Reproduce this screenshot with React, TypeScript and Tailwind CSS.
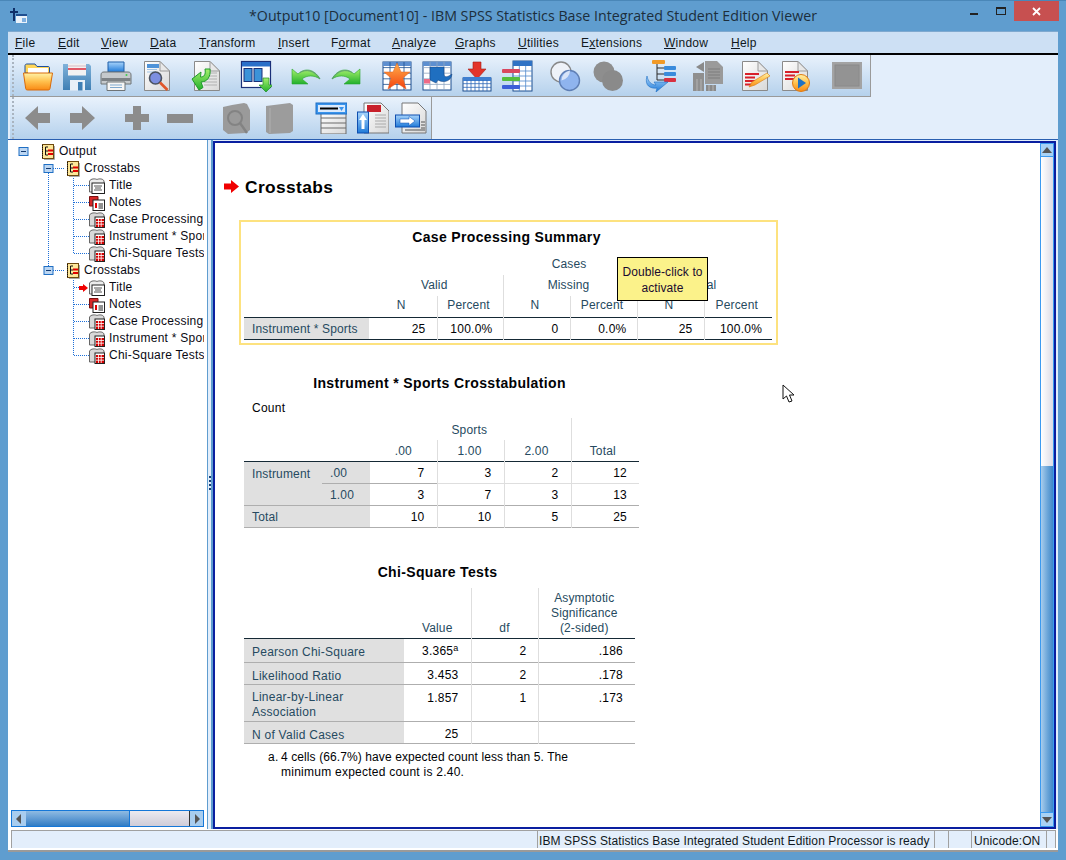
import React from 'react';

const FONT = "font-['Liberation_Sans',Arial,sans-serif]";

function Defs() {
  return (
    <svg width="0" height="0" className="absolute">
      <defs>
        <linearGradient id="orange" x1="0" y1="0" x2="0" y2="1">
          <stop offset="0" stopColor="#fff3a8" />
          <stop offset="0.5" stopColor="#ffc04d" />
          <stop offset="1" stopColor="#f98a14" />
        </linearGradient>
        <linearGradient id="green" x1="0" y1="0" x2="0" y2="1">
          <stop offset="0" stopColor="#a5f06c" />
          <stop offset="1" stopColor="#22b02c" />
        </linearGradient>
        <linearGradient id="doc" x1="0" y1="0" x2="1" y2="1">
          <stop offset="0" stopColor="#ffffff" />
          <stop offset="1" stopColor="#d8d8d8" />
        </linearGradient>
        <linearGradient id="blue" x1="0" y1="0" x2="0" y2="1">
          <stop offset="0" stopColor="#a8d4fb" />
          <stop offset="1" stopColor="#1f7ad8" />
        </linearGradient>
        <linearGradient id="floppy" x1="0" y1="0" x2="0" y2="1">
          <stop offset="0" stopColor="#7fb2da" />
          <stop offset="1" stopColor="#3f7fb4" />
        </linearGradient>
        <linearGradient id="star" x1="0" y1="0" x2="0" y2="1">
          <stop offset="0" stopColor="#ffb04a" />
          <stop offset="1" stopColor="#f4420f" />
        </linearGradient>
      </defs>
    </svg>
  );
}

function Icon({ children, className = '' }: { children: React.ReactNode; className?: string }) {
  return (
    <svg width="32" height="32" viewBox="0 0 32 32" className={`shrink-0 ${className}`}>
      {children}
    </svg>
  );
}

const Page = ({ fold = true }: { fold?: boolean }) => (
  <>
    <path d="M3.5 1.5H19L28.5 11V30.5H3.5Z" fill="url(#doc)" stroke="#8a8a8a" />
    {fold && <path d="M19 1.5V11H28.5Z" fill="#e8e8e8" stroke="#9a9a9a" />}
  </>
);

const GridRows = ({ x, y, w, h, cols, rows, c = '#1d4f8f' }: { x: number; y: number; w: number; h: number; cols: number; rows: number; c?: string }) => (
  <>
    {Array.from({ length: cols - 1 }, (_, i) => (
      <path key={`c${i}`} d={`M${x + ((i + 1) * w) / cols} ${y}V${y + h}`} stroke={c} strokeWidth="0.8" />
    ))}
    {Array.from({ length: rows - 1 }, (_, i) => (
      <path key={`r${i}`} d={`M${x} ${y + ((i + 1) * h) / rows}H${x + w}`} stroke={c} strokeWidth="0.8" />
    ))}
  </>
);

const icons1: { el: React.ReactNode; ml: string }[] = [
  {
    ml: 'ml-[10px]',
    el: (
      <Icon>
        <path d="M3 8V5.5C3 4.5 4 4 5 4H13L15 6.5H26C27 6.5 27.5 7 27.5 8V13H3Z" fill="#ffd659" stroke="#1d4f9f" />
        <rect x="6" y="8" width="20" height="5" fill="#fff" />
        <path d="M1.5 13H30.5L28 28.5C28 29.5 27 30 26 30H5.5C4.5 30 3.8 29.5 3.7 28.5Z" fill="url(#orange)" stroke="#d96a0a" />
      </Icon>
    ),
  },
  {
    ml: 'ml-[7px]',
    el: (
      <Icon>
        <path d="M2 4H28L30 6V30H2Z" fill="url(#floppy)" />
        <rect x="7" y="3.5" width="18" height="12" fill="#f2f2f2" />
        <rect x="7" y="8" width="18" height="2" fill="#e05a68" />
        <rect x="7" y="5.5" width="18" height="1" fill="#d8b8c0" />
        <rect x="9" y="20" width="15" height="10.5" fill="#e8f0f8" />
        <rect x="17" y="22" width="4.5" height="8.5" fill="#3f7fb4" />
      </Icon>
    ),
  },
  {
    ml: 'ml-[7px]',
    el: (
      <Icon>
        <path d="M8 2H24V12H8Z" fill="url(#blue)" stroke="#1f5fa8" />
        <path d="M4 12H28C30 12 31 13 31 15V24H1V15C1 13 2 12 4 12Z" fill="#c5c9cc" stroke="#6f7477" />
        <rect x="1.5" y="18" width="29" height="3" fill="#7d8286" />
        <circle cx="26.5" cy="15" r="1" fill="#3dcf4a" />
        <path d="M7 22H25V30.5H7Z" fill="#f6f6f6" stroke="#6f7477" />
        <path d="M10 25H22M10 27.5H22" stroke="#7fa9cf" />
      </Icon>
    ),
  },
  {
    ml: 'ml-[9px]',
    el: (
      <Icon>
        <Page />
        <rect x="6" y="4" width="12" height="4" fill="#4f93d8" />
        <path d="M6 9.5H16M6 12H15" stroke="#9ec3e6" />
        <circle cx="14.5" cy="18" r="6" fill="#7d8fe0" stroke="#4a5260" strokeWidth="1.6" />
        <path d="M19 22.5L26.5 30" stroke="#e0562a" strokeWidth="2.6" />
      </Icon>
    ),
  },
  {
    ml: 'ml-[18px]',
    el: (
      <Icon>
        <Page />
        <path d="M15 13H26M16 16H26M16 19H26M13 22H26M13 25H26" stroke="#b0b0b0" />
        <path d="M1 19L10 12L9.5 17C13 17 15 15 14 9H19C20 17 16 22 10 22L12 27.5L8 30Z" fill="url(#green)" stroke="#1f9a2a" />
      </Icon>
    ),
  },
  {
    ml: 'ml-[17px]',
    el: (
      <Icon>
        <rect x="1.5" y="1.5" width="29" height="26" fill="#fff" stroke="#1a2f78" strokeWidth="1.2" />
        <rect x="2" y="2" width="28" height="4.5" fill="#2a6fc8" />
        <rect x="4" y="8.5" width="8" height="13" fill="#3c93d8" stroke="#1a2f78" />
        <rect x="14" y="8.5" width="8" height="13" fill="#3c93d8" stroke="#1a2f78" />
        <path d="M23 18H29V25H33L26 32L19 25H23Z" fill="url(#green)" stroke="#1f8a2a" strokeWidth="0.7" />
      </Icon>
    ),
  },
  {
    ml: 'ml-[18px]',
    el: (
      <Icon>
        <path d="M2 9L8 14C14 8 24 8 30 19C24 15 17 15 12 19L18 24H2Z" fill="url(#green)" stroke="#2aa52f" strokeWidth="0.6" />
        <path d="M10 12.5C16 9 24 10 30 19" fill="none" stroke="#5c8f78" strokeWidth="0.8" />
      </Icon>
    ),
  },
  {
    ml: 'ml-[8px]',
    el: (
      <Icon>
        <path d="M30 9L24 14C18 8 8 8 2 19C8 15 15 15 20 19L14 24H30Z" fill="url(#green)" stroke="#2aa52f" strokeWidth="0.6" />
        <path d="M22 12.5C16 9 8 10 2 19" fill="none" stroke="#5c8f78" strokeWidth="0.8" />
      </Icon>
    ),
  },
  {
    ml: 'ml-[19px]',
    el: (
      <Icon>
        <rect x="2" y="2" width="28" height="28" fill="#fff" stroke="#1d4f8f" />
        <rect x="2" y="2" width="28" height="4" fill="#5d8fd0" />
        <GridRows x={2} y={2} w={28} h={28} cols={4} rows={5} />
        <path d="M16 3L20 12H29L22 18L25 29L16 23L7 29L10 18L3 12H12Z" fill="url(#star)" stroke="#e0611f" strokeWidth="0.5" />
      </Icon>
    ),
  },
  {
    ml: 'ml-[8px]',
    el: (
      <Icon>
        <rect x="2" y="2" width="28" height="28" fill="#fff" stroke="#1d4f8f" />
        <rect x="2" y="2" width="28" height="4" fill="#5d8fd0" />
        <GridRows x={2} y={2} w={28} h={28} cols={4} rows={5} c="#8ea4c0" />
        <path d="M9 7H23V14C23 18 27 17 31 14C30 22 22 23 17 20L15 23L9 20Z" fill="#1f6fc0" stroke="#163f78" strokeWidth="0.5" />
        <rect x="3" y="19" width="6" height="4.5" fill="#ee6a86" />
      </Icon>
    ),
  },
  {
    ml: 'ml-[8px]',
    el: (
      <Icon>
        <path d="M12 2H20V9H25L16 19L7 9H12Z" fill="#e3342a" stroke="#a51c16" strokeWidth="0.6" />
        <rect x="2" y="18" width="28" height="13" fill="#fff" stroke="#1d4f8f" />
        <rect x="2" y="17" width="28" height="4" fill="#3f7fd0" />
        <GridRows x={2} y={20} w={28} h={11} cols={7} rows={3} c="#2f68b8" />
      </Icon>
    ),
  },
  {
    ml: 'ml-[8px]',
    el: (
      <Icon>
        <rect x="12" y="1" width="19" height="30" fill="#fff" stroke="#1d4f8f" />
        <rect x="12" y="1" width="19" height="5" fill="#2f72c4" />
        <GridRows x={12} y={6} w={19} h={25} cols={3} rows={5} c="#4f88cc" />
        <rect x="1" y="9" width="18" height="4" rx="1" fill="#d9485f" />
        <rect x="1" y="17" width="18" height="4" rx="1" fill="#55bd3d" />
        <rect x="1" y="25" width="18" height="4" rx="1" fill="#3c5fd8" />
      </Icon>
    ),
  },
  {
    ml: 'ml-[16px]',
    el: (
      <Icon>
        <circle cx="12" cy="12" r="10" fill="#eef2f8" stroke="#888" strokeWidth="1.4" />
        <circle cx="20.5" cy="20.5" r="10" fill="#8fb4ee" stroke="#5f7fb5" strokeWidth="1.4" />
        <path d="M12.5 20.5A10 10 0 0 1 21 10.5A10 10 0 0 1 12.5 20.5Z" fill="#d8e4f8" />
      </Icon>
    ),
  },
  {
    ml: 'ml-[11px]',
    el: (
      <Icon>
        <circle cx="12" cy="12" r="10.5" fill="#8e8e8e" />
        <circle cx="20.5" cy="20.5" r="10.5" fill="#8a8a8a" />
      </Icon>
    ),
  },
  {
    ml: 'ml-[20px]',
    el: (
      <Icon>
        <rect x="8" y="0" width="13" height="4" rx="1" fill="#f29a27" />
        <rect x="20" y="6" width="12" height="4" rx="1" fill="#3a8bdc" />
        <rect x="20" y="12" width="12" height="4" rx="1" fill="#3a8bdc" />
        <rect x="20" y="18" width="12" height="4" rx="1" fill="#d83040" />
        <path d="M13 4V20M13 8H20M13 14H20M13 20H20" stroke="#2a2a2a" />
        <path d="M3 16C0 26 7 29 13 28L12 32L24 22L10 22L12 25C8 25 4 22 3 16Z" fill="url(#blue)" stroke="#1f6fc4" strokeWidth="0.6" />
      </Icon>
    ),
  },
  {
    ml: 'ml-[16px]',
    el: (
      <Icon>
        <path d="M1 13H12V31H1Z" fill="#8f8f8f" />
        <path d="M13 1H25L31 7V24H13Z" fill="#9a9a9a" />
        <path d="M16 9H28M16 12H28M16 15H28M16 18H28" stroke="#7c7c7c" />
        <path d="M12 2L4 7L12 12ZM6 7H13" fill="#8a8a8a" />
        <path d="M14 25H24V31H14Z" fill="#8a8a8a" />
        <path d="M5 19V31M9 19V31M17 25V31M21 25V31" stroke="#b4b4b4" />
      </Icon>
    ),
  },
  {
    ml: 'ml-[15px]',
    el: (
      <Icon>
        <Page />
        <rect x="6" y="13" width="14" height="2" fill="#d8202a" />
        <rect x="6" y="16.5" width="10" height="2" fill="#d8202a" />
        <rect x="6" y="20" width="14" height="2" fill="#d8202a" />
        <rect x="6" y="23.5" width="7" height="2" fill="#d8202a" />
        <path d="M10 27L13 22L28 13L31 16L16 25Z" fill="url(#orange)" stroke="#d97a10" strokeWidth="0.6" />
      </Icon>
    ),
  },
  {
    ml: 'ml-[8px]',
    el: (
      <Icon>
        <Page />
        <rect x="6" y="11" width="14" height="2" fill="#d8202a" />
        <rect x="6" y="14.5" width="10" height="2" fill="#d8202a" />
        <rect x="6" y="18" width="13" height="2" fill="#d8202a" />
        <circle cx="22" cy="23" r="8.5" fill="url(#orange)" stroke="#e07a10" />
        <path d="M19 17.5L27 23L19 28.5Z" fill="#1f72c4" />
      </Icon>
    ),
  },
  {
    ml: 'ml-[20px]',
    el: (
      <Icon>
        <rect x="1" y="2" width="30" height="27" fill="#a3a3a3" />
        <rect x="4" y="5" width="24" height="21" fill="#939393" stroke="#8a8a8a" />
      </Icon>
    ),
  },
];

const icons2: { el: React.ReactNode; ml: string }[] = [
  {
    ml: 'ml-[10px]',
    el: (
      <Icon>
        <path d="M3 16L16 4V11H28V21H16V28Z" fill="#8c8c8c" />
      </Icon>
    ),
  },
  {
    ml: 'ml-[12px]',
    el: (
      <Icon>
        <path d="M29 16L16 4V11H4V21H16V28Z" fill="#8c8c8c" />
      </Icon>
    ),
  },
  {
    ml: 'ml-[23px]',
    el: (
      <Icon>
        <path d="M12 4H20V12H28V20H20V28H12V20H4V12H12Z" fill="#8c8c8c" />
      </Icon>
    ),
  },
  {
    ml: 'ml-[11px]',
    el: (
      <Icon>
        <rect x="3" y="12" width="26" height="9" fill="#8c8c8c" />
      </Icon>
    ),
  },
  {
    ml: 'ml-[24px]',
    el: (
      <Icon>
        <path d="M3 5L12 3L24 1L27 2L30 8V28L26 31L8 32L3 28Z" fill="#9a9a9a" />
        <circle cx="15" cy="16" r="7" fill="none" stroke="#838383" strokeWidth="2" />
        <path d="M20 21L27 31" stroke="#838383" strokeWidth="2.4" />
      </Icon>
    ),
  },
  {
    ml: 'ml-[11px]',
    el: (
      <Icon>
        <path d="M3 4L27 1L30 3V29L27 31L6 32L3 30Z" fill="#9c9c9c" />
        <path d="M7 6V31" stroke="#b0b0b0" />
      </Icon>
    ),
  },
  {
    ml: 'ml-[20px]',
    el: (
      <Icon>
        <rect x="6" y="10" width="25" height="22" fill="url(#doc)" stroke="#6a6a6a" />
        <path d="M6 16H31M6 21H31M6 26H31" stroke="#6a6a6a" />
        <rect x="1" y="1" width="31" height="11" fill="#3a94ec" stroke="#1f6fc4" />
        <rect x="3" y="3" width="27" height="7" fill="#dbeafc" />
        <rect x="5" y="5.5" width="18" height="2" fill="#000" />
        <path d="M24 5H29L26.5 9Z" fill="#3a94ec" />
      </Icon>
    ),
  },
  {
    ml: 'ml-[10px]',
    el: (
      <Icon>
        <path d="M7 1H24L32 9V31H7Z" fill="url(#doc)" stroke="#777" />
        <rect x="10" y="3" width="14" height="7" fill="#c8202a" />
        <path d="M18 13H29M18 16H29M18 19H29M18 22H29M18 25H29" stroke="#aaa" />
        <rect x="0.5" y="10" width="11" height="21" fill="url(#blue)" stroke="#0f4fb0" />
        <path d="M6 12L10 18H7.5V27H4.5V18H2Z" fill="#fff" />
      </Icon>
    ),
  },
  {
    ml: 'ml-[6px]',
    el: (
      <Icon>
        <path d="M7 1H23L31 9V31H7Z" fill="url(#doc)" stroke="#777" />
        <path d="M26 20H30M26 23H30M26 26H30M10 28H30" stroke="#555" />
        <rect x="0.5" y="13" width="24" height="12" fill="url(#blue)" stroke="#0f4fb0" />
        <path d="M5 17H14V14.5L20 19L14 23.5V21H5Z" fill="#fff" stroke="#0f4fb0" strokeWidth="0.5" />
      </Icon>
    ),
  },
];

const menus: [string, string, string, string][] = [
  ['', 'F', 'ile', 'w-[43px]'],
  ['', 'E', 'dit', 'w-[43px]'],
  ['', 'V', 'iew', 'w-[49px]'],
  ['', 'D', 'ata', 'w-[49px]'],
  ['', 'T', 'ransform', 'w-[79px]'],
  ['', 'I', 'nsert', 'w-[53px]'],
  ['F', 'o', 'rmat', 'w-[61px]'],
  ['', 'A', 'nalyze', 'w-[63px]'],
  ['', 'G', 'raphs', 'w-[63px]'],
  ['', 'U', 'tilities', 'w-[63px]'],
  ['E', 'x', 'tensions', 'w-[83px]'],
  ['', 'W', 'indow', 'w-[67px]'],
  ['', 'H', 'elp', 'w-[40px]'],
];

function Gripper() {
  return <div className="w-[2px] h-full ml-[2px] shrink-0 border-l-2 border-dotted border-[#a9b4c0]" />;
}

function LeafIcon({ kind }: { kind: 'title' | 'notes' | 'table' }) {
  return (
    <svg width="16" height="16" viewBox="0 0 16 16" className="shrink-0">
      {kind === 'notes' ? (
        <>
          <path d="M0.5 1.5H9V11H0.5Z" fill="#d62828" stroke="#7a1010" />
          <rect x="4" y="5" width="11.5" height="10.5" fill="#fff" stroke="#222" />
          <rect x="6" y="8" width="2" height="5" fill="#e00000" />
          <path d="M9.5 9H14M9.5 11H14M9.5 13H14" stroke="#222" />
        </>
      ) : kind === 'title' ? (
        <>
          <path d="M0.5 3C2 0.5 6 0.5 8 1.5C10 0.5 14 0.5 15 3V14H0.5Z" fill="#ececec" stroke="#666" />
          <rect x="3" y="5" width="12.5" height="10.5" fill="#fff" stroke="#222" />
          <path d="M5 8H13M6 10H12M5 12H13" stroke="#555" />
        </>
      ) : (
        <>
          <path d="M0.5 3C2 0.5 6 0.5 8 1.5C10 0.5 14 0.5 15 3V14H0.5Z" fill="#d8d8d8" stroke="#666" />
          <rect x="6" y="5" width="9.5" height="10.5" fill="#fff" stroke="#222" />
          <rect x="7" y="7" width="8" height="8" fill="#d40000" />
          <path d="M9.5 7V15M12.2 7V15M7 9.5H15M7 12.2H15" stroke="#fff" strokeWidth="0.8" />
        </>
      )}
    </svg>
  );
}

function DocIcon() {
  return (
    <svg width="16" height="16" viewBox="0 0 16 16" className="shrink-0">
      <rect x="2.5" y="0.5" width="11" height="14" fill="#fde79a" stroke="#6e4a10" />
      <path d="M2.5 1V14" stroke="#111" strokeDasharray="1 1" />
      <path d="M8 3H5.5V11H8M5.5 7H8" fill="none" stroke="#111" />
      <rect x="8" y="5.5" width="5" height="2" fill="#e00000" />
      <rect x="8" y="9" width="5" height="2" fill="#e00000" />
      <path d="M4 15.5H14.5V2" fill="none" stroke="#a8a8a8" />
    </svg>
  );
}

const treeRows: { label: string; pad: string; kind: 'doc' | 'title' | 'notes' | 'table' }[] = [
  { label: 'Output', pad: 'ml-[32px] w-[164px] gap-[3px]', kind: 'doc' },
  { label: 'Crosstabs', pad: 'ml-[57px] w-[139px] gap-[3px]', kind: 'doc' },
  { label: 'Title', pad: 'ml-[81px] w-[115px] gap-[4px]', kind: 'title' },
  { label: 'Notes', pad: 'ml-[81px] w-[115px] gap-[4px]', kind: 'notes' },
  { label: 'Case Processing Summary', pad: 'ml-[81px] w-[115px] gap-[4px]', kind: 'table' },
  { label: 'Instrument * Sports Crosstabulation', pad: 'ml-[81px] w-[115px] gap-[4px]', kind: 'table' },
  { label: 'Chi-Square Tests', pad: 'ml-[81px] w-[115px] gap-[4px]', kind: 'table' },
  { label: 'Crosstabs', pad: 'ml-[57px] w-[139px] gap-[3px]', kind: 'doc' },
  { label: 'Title', pad: 'ml-[81px] w-[115px] gap-[4px]', kind: 'title' },
  { label: 'Notes', pad: 'ml-[81px] w-[115px] gap-[4px]', kind: 'notes' },
  { label: 'Case Processing Summary', pad: 'ml-[81px] w-[115px] gap-[4px]', kind: 'table' },
  { label: 'Instrument * Sports Crosstabulation', pad: 'ml-[81px] w-[115px] gap-[4px]', kind: 'table' },
  { label: 'Chi-Square Tests', pad: 'ml-[81px] w-[115px] gap-[4px]', kind: 'table' },
];

function TreeRow({ row }: { row: (typeof treeRows)[number] }) {
  return (
    <div className={`h-[17px] flex items-center ${row.pad}`}>
      {row.kind === 'doc' ? <DocIcon /> : <LeafIcon kind={row.kind} />}
      <span className="overflow-hidden whitespace-nowrap text-[12px] text-[#0a0a14] tracking-[0.25px] leading-[17px]">{row.label}</span>
    </div>
  );
}

function TreeLines() {
  const leaves = [184, 201, 218, 235, 252, 303, 320, 337, 354];
  const box = (cx: number, cy: number) => (
    <g key={`${cx}-${cy}`}>
      <rect x={cx - 4.5} y={cy - 4} width="9" height="8" fill="#bcd6f2" stroke="#1f6fc4" />
      <path d={`M${cx - 2.5} ${cy}H${cx + 2.5}`} stroke="#123a70" />
    </g>
  );
  return (
    <svg className="absolute left-0 top-0" width="199" height="240" viewBox="8 139 199 240">
      <g stroke="#1e70d8" strokeDasharray="1 1" fill="none">
        <path d="M48.5 172V265M53 167.5H65M53 269.5H65M73.5 175V252.5M73.5 277V354.5" />
        {leaves.map((y) => (
          <path key={y} d={`M74 ${y + 0.5}H90`} />
        ))}
        <path d="M74 286.5H79" />
      </g>
      {box(23.5, 150.5)}
      {box(48.5, 167.5)}
      {box(48.5, 269.5)}
      <path d="M79 285H83V283L88 287L83 291V289H79Z" fill="#f00000" />
    </svg>
  );
}

const th = 'text-[#264a60] font-normal text-[12px] tracking-[0.15px]';
const td = 'text-[#010205] text-[12px] tracking-[0.25px] text-right';
const vline = 'border-l border-[#dedede]';
const hgray = 'border-t border-[#aeaeae]';

function CaseTable() {
  const vals = ['25', '100.0%', '0', '0.0%', '25', '100.0%'];
  const head = `${th} text-center pb-[2px] pr-[3px]`;
  return (
    <table className="table-fixed w-[528px]">
      <colgroup>
        <col className="w-[125px]" />
        <col className="w-[68px]" />
        <col className="w-[66px]" />
        <col className="w-[67px]" />
        <col className="w-[67px]" />
        <col className="w-[67px]" />
        <col className="w-[68px]" />
      </colgroup>
      <tbody>
        <tr className="h-[21px]">
          <td />
          <td colSpan={6} className={head}>Cases</td>
        </tr>
        <tr className="h-[21px]">
          <td />
          <td colSpan={2} className={head}>Valid</td>
          <td colSpan={2} className={`${head} ${vline}`}>Missing</td>
          <td colSpan={2} className={`${head} ${vline}`}>Total</td>
        </tr>
        <tr className="h-[21px]">
          <td />
          {['N', 'Percent', 'N', 'Percent', 'N', 'Percent'].map((h, i) => (
            <td key={i} className={`${head} ${i > 0 ? vline : ''}`}>{h}</td>
          ))}
        </tr>
        <tr className="h-[22px] border-t border-b border-[#152935]">
          <td className={`${th} bg-[#e0e0e0] pl-[8px] pt-[1px] whitespace-nowrap`}>Instrument * Sports</td>
          {vals.map((v, i) => (
            <td key={i} className={`${td} pt-[1px] ${i > 0 ? vline : ''} ${i % 2 === 0 ? 'pr-[11px]' : 'pr-[10px]'}`}>{v}</td>
          ))}
        </tr>
      </tbody>
    </table>
  );
}

function CrossTable() {
  const rows = [
    ['7', '3', '2', '12'],
    ['3', '7', '3', '13'],
    ['10', '10', '5', '25'],
  ];
  const num = `${td} pr-[12px] pt-[1px]`;
  return (
    <table className="table-fixed w-[395px]">
      <colgroup>
        <col className="w-[78px]" />
        <col className="w-[48px]" />
        <col className="w-[67px]" />
        <col className="w-[67px]" />
        <col className="w-[67px]" />
        <col className="w-[68px]" />
      </colgroup>
      <tbody>
        <tr className="h-[22px]">
          <td colSpan={2} />
          <td colSpan={3} className={`${th} text-center pt-[2px] pr-[2px]`}>Sports</td>
          <td rowSpan={2} className={`${th} text-center align-bottom pb-[1px] pr-[5px] ${vline}`}>Total</td>
        </tr>
        <tr className="h-[21px]">
          <td colSpan={2} />
          <td className={`${th} text-center pt-[2px]`}>.00</td>
          <td className={`${th} text-center pt-[2px] pr-[2px] ${vline}`}>1.00</td>
          <td className={`${th} text-center pt-[2px] pr-[2px] ${vline}`}>2.00</td>
        </tr>
        <tr className="h-[22px] border-t border-[#152935]">
          <td rowSpan={2} className={`${th} bg-[#e0e0e0] pl-[8px] align-top pt-[3px]`}>Instrument</td>
          <td className={`${th} bg-[#e0e0e0] pl-[8px] pt-[2px]`}>.00</td>
          {rows[0].map((v, i) => (
            <td key={i} className={`${num} ${i > 0 ? vline : ''}`}>{v}</td>
          ))}
        </tr>
        <tr className="h-[22px]">
          <td className={`${th} bg-[#e0e0e0] pl-[8px] pt-[1px] ${hgray}`}>1.00</td>
          {rows[1].map((v, i) => (
            <td key={i} className={`${num} ${hgray} ${i > 0 ? vline : ''}`}>{v}</td>
          ))}
        </tr>
        <tr className={`h-[22px] border-b border-[#152935] ${hgray}`}>
          <td colSpan={2} className={`${th} bg-[#e0e0e0] pl-[8px] pt-[1px]`}>Total</td>
          {rows[2].map((v, i) => (
            <td key={i} className={`${num} ${i > 0 ? vline : ''}`}>{v}</td>
          ))}
        </tr>
      </tbody>
    </table>
  );
}

function ChiTable() {
  const rh = `${th} tracking-[0.25px] bg-[#e0e0e0] pl-[8px] leading-[15px] align-top`;
  const c = `${td} align-top pt-[4px]`;
  return (
    <table className="table-fixed w-[391px]">
      <colgroup>
        <col className="w-[160px]" />
        <col className="w-[67px]" />
        <col className="w-[67px]" />
        <col className="w-[97px]" />
      </colgroup>
      <tbody>
        <tr className="h-[51px] border-b border-[#152935]">
          <td />
          <td className={`${th} text-center align-bottom pb-[2px] leading-[15px]`}>Value</td>
          <td className={`${th} text-center align-bottom pb-[2px] leading-[15px] ${vline}`}>df</td>
          <td className={`${th} text-center align-bottom pb-[2px] pr-[5px] leading-[15px] ${vline}`}>
            Asymptotic
            <br />
            Significance
            <br />
            (2-sided)
          </td>
        </tr>
        <tr className="h-[24px]">
          <td className={`${rh} pt-[6px]`}>Pearson Chi-Square</td>
          <td className={`${td} pt-[1px] pr-[12px]`}>
            3.365<sup className="text-[9px] leading-none">a</sup>
          </td>
          <td className={`${td} pt-[1px] pr-[11px] ${vline}`}>2</td>
          <td className={`${td} pt-[1px] pr-[12px] ${vline}`}>.186</td>
        </tr>
        <tr className={`h-[22px] ${hgray}`}>
          <td className={`${rh} pt-[6px]`}>Likelihood Ratio</td>
          <td className={`${td} pt-[3px] pr-[12px]`}>3.453</td>
          <td className={`${td} pt-[3px] pr-[11px] ${vline}`}>2</td>
          <td className={`${td} pt-[3px] pr-[12px] ${vline}`}>.178</td>
        </tr>
        <tr className={`h-[37px] ${hgray}`}>
          <td className={`${rh} pt-[5px]`}>
            Linear-by-Linear
            <br />
            Association
          </td>
          <td className={`${c} pr-[12px]`}>1.857</td>
          <td className={`${c} pr-[11px] ${vline}`}>1</td>
          <td className={`${c} pr-[12px] ${vline}`}>.173</td>
        </tr>
        <tr className={`h-[22px] border-b border-[#152935] ${hgray}`}>
          <td className={`${rh} pt-[6px]`}>N of Valid Cases</td>
          <td className={`${td} pt-[3px] pr-[12px]`}>25</td>
          <td className={vline} />
          <td className={vline} />
        </tr>
      </tbody>
    </table>
  );
}

const tableTitle = 'font-bold text-[14px] tracking-[0.35px] text-[#010205] leading-[18px]';

export default function App() {
  return (
    <div className={`w-[1066px] h-[860px] flex flex-col overflow-hidden bg-[#5f9dcf] ${FONT}`}>
      <Defs />

      {/* title bar */}
      <div className="h-[31px] shrink-0 flex items-start relative border-t border-[#4a87b8]">
        <svg width="18" height="16" viewBox="0 0 18 16" className="ml-[10px] mt-[7px] shrink-0">
          <path d="M4 0V13M0 4H8" stroke="#0f2f68" strokeWidth="2" fill="none" />
          <rect x="6" y="6" width="11" height="9" fill="#eaf2fa" />
          <rect x="6" y="6" width="11" height="2" fill="#1f4f90" />
          <rect x="12" y="10" width="4" height="4" fill="#7fb0e0" />
        </svg>
        <div className="absolute left-0 right-0 top-[6px] text-center font-['Open_Sans',sans-serif] text-[14.22px] leading-[18px] text-[#1c2e3c]">
          *Output10 [Document10] - IBM SPSS Statistics Base Integrated Student Edition Viewer
        </div>
        <div className="ml-auto mr-[7px] flex items-start">
          <div className="w-[8px] h-[2px] bg-[#222] mt-[12px] mr-[18px]" />
          <div className="w-[10px] h-[8px] border border-t-2 border-[#222] mt-[6px] mr-[8px]" />
          <div className="w-[45px] h-[20px] bg-[#c75050] flex items-center justify-center">
            <svg width="9" height="9" viewBox="0 0 9 9">
              <path d="M1 1L8 8M8 1L1 8" stroke="#fff" strokeWidth="1.8" />
            </svg>
          </div>
        </div>
      </div>

      {/* window */}
      <div className="flex-1 min-h-0 mx-[8px] mb-[8px] flex flex-col bg-white">
        <div className="h-[24px] shrink-0 bg-[#cde0f4] border-b-2 border-black border-t border-t-[#7fa9cf] flex items-center pl-[7px] text-[12px] tracking-[0.25px] text-[#101820]">
          {menus.map(([pre, u, post, w]) => (
            <span key={u + post} className={`${w} shrink-0 whitespace-nowrap`}>
              {pre}
              <span className="underline underline-offset-[1px]">{u}</span>
              {post}
            </span>
          ))}
        </div>

        <div className="h-[84px] shrink-0 bg-[#e3eefb] flex flex-col items-start">
          <div className="h-[42px] w-[861px] ml-[2px] flex items-center bg-gradient-to-b from-[#e9f2fc] to-[#b5d1ec] border-r border-b border-[#9a9a9a]">
            <Gripper />
            <div className="flex items-center -ml-[2px]">
              {icons1.map((ic, i) => (
                <div key={i} className={ic.ml}>{ic.el}</div>
              ))}
            </div>
          </div>
          <div className="h-[42px] w-[422px] ml-[2px] flex items-center bg-gradient-to-b from-[#e9f2fc] to-[#b5d1ec] border-r border-[#9a9a9a]">
            <Gripper />
            <div className="flex items-center -ml-[2px]">
              {icons2.map((ic, i) => (
                <div key={i} className={ic.ml}>{ic.el}</div>
              ))}
            </div>
          </div>
        </div>

        {/* panes */}
        <div className="flex-1 min-h-0 flex bg-[#e3eefb] border-t border-[#2a5fb0]">
          <div className="w-[199px] shrink-0 bg-white relative flex flex-col pt-[3px]">
            <TreeLines />
            <div className="relative flex-1 min-h-0">
              {treeRows.map((r, i) => (
                <TreeRow key={i} row={r} />
              ))}
            </div>
            <div className="h-[17px] mx-[3px] mb-[2px] flex border border-[#1577d8] bg-[#d7d5e0]">
              <div className="w-[14px] bg-[#a8cdef] flex items-center justify-center">
                <svg width="6" height="10" viewBox="0 0 6 10"><path d="M5 0V10L0 5Z" fill="#555" /></svg>
              </div>
              <div className="w-[104px] bg-gradient-to-b from-[#8fbbe2] to-[#2f7cc4] border-r border-[#1577d8]" />
              <div className="flex-1 bg-gradient-to-b from-[#eceaf0] to-[#cfccd8] border-r border-[#333]" />
              <div className="w-[13px] bg-[#a8cdef] flex items-center justify-center">
                <svg width="6" height="10" viewBox="0 0 6 10"><path d="M1 0V10L6 5Z" fill="#555" /></svg>
              </div>
            </div>
          </div>

          <div className="w-[6px] shrink-0 bg-[#e3eefb] border-l border-[#5f9dcf] border-r-2 border-r-[#5f9dcf] flex flex-col justify-center items-end gap-[2px] pb-[4px]">
            <div className="w-[2px] h-[2px] bg-[#14407a]" />
            <div className="w-[2px] h-[2px] bg-[#14407a]" />
            <div className="w-[2px] h-[2px] bg-[#14407a]" />
            <div className="w-[2px] h-[2px] bg-[#14407a]" />
          </div>

          <div className="flex-1 min-w-0 flex bg-white border-2 border-[#0a1fa0] mt-[1px] mr-[2px] relative">
            <div className="flex-1 min-w-0 pl-[9px] text-[12px]">
              <div className="flex items-center h-[22px] mt-[34px]">
                <svg width="15" height="13" viewBox="0 0 15 13" className="shrink-0 -mt-[3px]">
                  <path d="M0 3.5H7V0L15 6.5L7 13V9.5H0Z" fill="#f00000" />
                </svg>
                <span className="ml-[6px] font-bold text-[17.33px] tracking-[0.4px] text-black">Crosstabs</span>
              </div>

              <div className="relative mt-[21px] ml-[15px] w-[539px] h-[125px] border-2 border-[#fde27f] pl-[3px] pt-[6px]">
                <div className={`${tableTitle} text-center w-[525px] mb-[8px]`}>Case Processing Summary</div>
                <CaseTable />
                <div className="absolute left-[376px] top-[35px] w-[91px] h-[44px] bg-[#fbf28a] border border-black text-center text-[12px] tracking-[0.1px] leading-[16px] pt-[6px] text-[#1a0a30]">
                  Double-click to
                  <br />
                  activate
                </div>
              </div>

              <div className="ml-[20px] mt-[29px] w-[395px]">
                <div className={`${tableTitle} text-center -ml-[4px]`}>Instrument * Sports Crosstabulation</div>
                <div className="text-[12px] tracking-[0.25px] text-[#010205] pl-[8px] mt-[8px] h-[18px] leading-[16px]">Count</div>
                <CrossTable />
              </div>

              <div className="ml-[20px] mt-[35px] w-[391px]">
                <div className={`${tableTitle} text-center -ml-[4px] mb-[7px]`}>Chi-Square Tests</div>
                <ChiTable />
                <div className="flex text-[12px] tracking-[0.25px] text-[#010205] leading-[15px] mt-[6px] pl-[24px]">
                  <span className="w-[13px] shrink-0">a.</span>
                  <span>
                    <span className="tracking-[0.1px]">4 cells (66.7%) have expected count less than 5. The</span>
                    <br />
                    minimum expected count is 2.40.
                  </span>
                </div>
              </div>

              <svg width="13" height="20" viewBox="0 0 13 20" className="absolute left-[567px] top-[241px]">
                <path d="M1 1V15L4.5 12L7 18L10 17L7.5 11H12Z" fill="#fff" stroke="#111" />
              </svg>
            </div>

            <div className="w-[14px] shrink-0 flex flex-col">
              <div className="h-[14px] bg-[#a8d2f5] border border-[#3b9af0] flex items-center justify-center">
                <svg width="10" height="6" viewBox="0 0 10 6"><path d="M0 6H10L5 0Z" fill="#555" /></svg>
              </div>
              <div className="h-[309px] bg-gradient-to-r from-[#ffffff] to-[#dcdce6] border-x border-x-[#3b9af0]" />
              <div className="flex-1 bg-gradient-to-r from-[#a9cdec] via-[#6fa8da] to-[#3f87c8] border-x border-x-[#3b9af0]" />
              <div className="h-[15px] bg-[#a8d2f5] border border-[#3b9af0] flex items-center justify-center">
                <svg width="10" height="6" viewBox="0 0 10 6"><path d="M0 0H10L5 6Z" fill="#555" /></svg>
              </div>
            </div>
          </div>
        </div>

        {/* status bar */}
        <div className="h-[23px] shrink-0 flex items-stretch bg-white pt-[1px] pb-[2px] pl-[3px] pr-[2px] border-b-2 border-[#9a9a9a]">
          <div className="flex-1 flex text-[12px] tracking-[0.1px] text-[#101820] bg-[#e3eefb]">
            <div className="w-[526px] shrink-0 border-t border-l border-[#a0a0a0]" />
            <div className="w-[397px] shrink-0 border-t border-l border-[#a0a0a0] pl-[1px] leading-[20px] whitespace-nowrap overflow-hidden">
              IBM SPSS Statistics Base Integrated Student Edition Processor is ready
            </div>
            <div className="w-[14px] shrink-0 border-t border-l border-[#a0a0a0]" />
            <div className="w-[23px] shrink-0 border-t border-l border-[#a0a0a0]" />
            <div className="w-[75px] shrink-0 border-t border-l border-[#a0a0a0] pl-[2px] leading-[20px]">Unicode:ON</div>
            <div className="flex-1 border-t border-x border-[#a0a0a0]" />
          </div>
        </div>
      </div>
    </div>
  );
}
